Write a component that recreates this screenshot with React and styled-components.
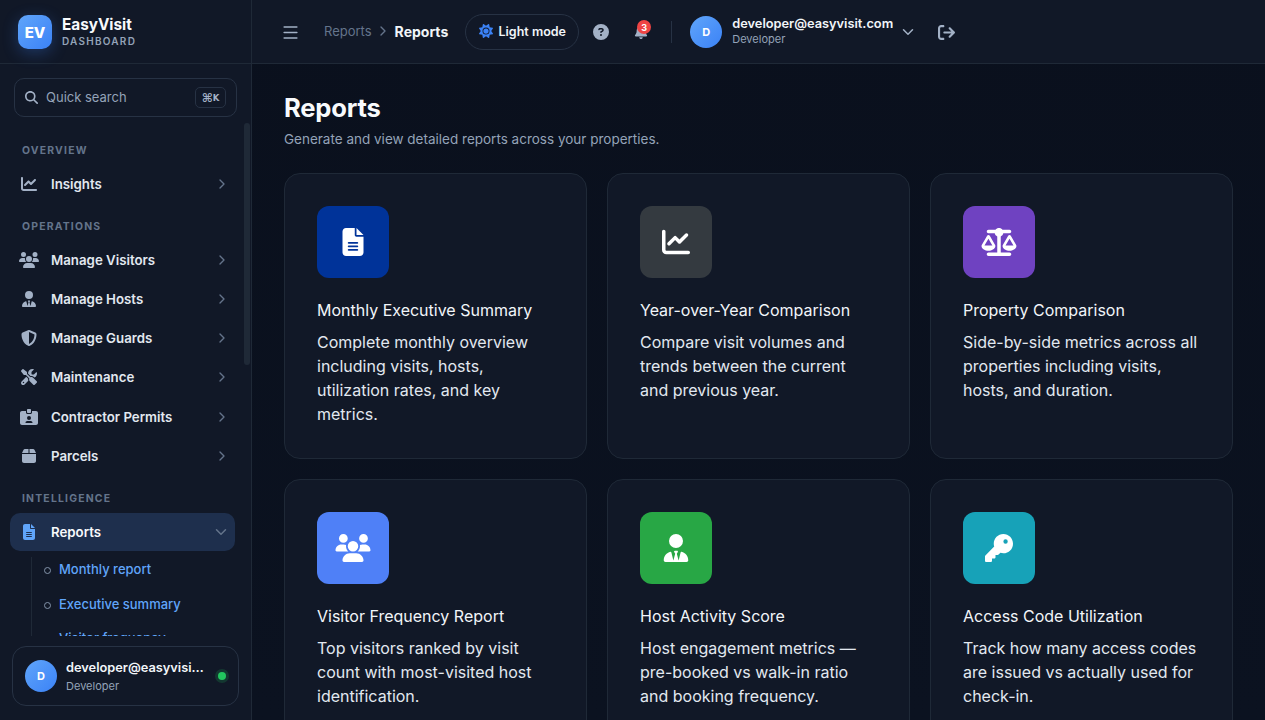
import React from "react";
import styled, { createGlobalStyle } from "styled-components";
import { ChevronRight, ChevronDown, Menu } from "lucide-react";
import {
  FaChartLine,
  FaUsers,
  FaUserTie,
  FaShieldHalved,
  FaScrewdriverWrench,
  FaIdCardClip,
  FaBox,
  FaFileLines,
  FaMagnifyingGlass,
  FaSun,
  FaCircleQuestion,
  FaBell,
  FaArrowRightFromBracket,
  FaScaleBalanced,
  FaKey,
} from "react-icons/fa6";

const GlobalStyle = createGlobalStyle`
  html, body, #root {
    margin: 0;
    height: 100%;
    overflow: hidden;
  }
  * {
    box-sizing: border-box;
  }
  body {
    background: #0b1120;
    font-family: Inter, "Liberation Sans", sans-serif;
    color: #f1f5f9;
  }
`;

const Shell = styled.div`
  display: flex;
  height: 720px;
`;

const Sidebar = styled.aside`
  position: relative;
  width: 252px;
  flex-shrink: 0;
  display: flex;
  flex-direction: column;
  background: #111827;
  border-right: 1px solid #1f2937;
`;

const Brand = styled.div`
  height: 64px;
  flex-shrink: 0;
  display: flex;
  align-items: center;
  gap: 10px;
  padding: 1px 18px 0;
  border-bottom: 1px solid #1f2937;
`;

const BrandMark = styled.div`
  width: 34px;
  height: 34px;
  border-radius: 10px;
  display: flex;
  align-items: center;
  justify-content: center;
  background: linear-gradient(135deg, #60a5fa, #3b82f6);
  box-shadow: 0 4px 16px rgba(59, 130, 246, 0.3);
  font-size: 15px;
  font-weight: 800;
  color: #fff;
`;

const BrandText = styled.div`
  display: flex;
  flex-direction: column;
`;

const BrandName = styled.span`
  font-size: 15.3px;
  line-height: 18px;
  font-weight: 700;
  color: #f8fafc;
`;

const BrandSub = styled.span`
  font-size: 10px;
  line-height: 14px;
  font-weight: 600;
  letter-spacing: 1.25px;
  color: #94a3b8;
`;

const Search = styled.div`
  flex-shrink: 0;
  height: 39px;
  margin: 14px 14px 0;
  padding: 0 10px;
  display: flex;
  align-items: center;
  gap: 8px;
  border: 1px solid #273244;
  border-radius: 10px;
  font-size: 13px;
  color: #94a3b8;

  svg {
    width: 13px;
    height: 13px;
    color: #a3b1c6;
  }
`;

const SearchLabel = styled.span`
  flex: 1;
  padding-bottom: 1px;
`;

const Kbd = styled.span`
  height: 21px;
  width: 31px;
  display: flex;
  align-items: center;
  justify-content: center;
  border: 1px solid #273244;
  border-radius: 5px;
  font-family: "DejaVu Sans", sans-serif;
  font-size: 12px;
  font-weight: 700;
  color: #a3b1c6;

  small {
    font-size: 8.5px;
    font-weight: 600;
  }
`;

const Nav = styled.nav`
  flex: 1;
  min-height: 0;
  overflow: hidden;
  padding: 0 16px 0 10px;
`;

const NavSection = styled.div`
  padding: ${(p) => (p.$first ? "27px" : "17px")} 12px 6px;
  font-size: 10.4px;
  line-height: 14px;
  font-weight: 700;
  letter-spacing: 1.2px;
  color: #64748b;
`;

const NavItem = styled.div`
  height: ${(p) => (p.$active ? "38px" : "39.2px")};
  margin-top: ${(p) => (p.$active ? "1px" : 0)};
  padding: 0 5px 0 9px;
  display: flex;
  align-items: center;
  gap: 12px;
  border-radius: 10px;
  background: ${(p) => (p.$active ? "#1e2f4d" : "transparent")};
  font-size: 13.28px;
  font-weight: 600;
  color: ${(p) => (p.$active ? "#f8fafc" : "#e2e8f0")};
`;

const NavIcon = styled.span`
  width: 20px;
  flex-shrink: 0;
  display: flex;
  justify-content: center;
  color: ${(p) => (p.$active ? "#60a5fa" : "#a3b1c6")};

  svg {
    width: 20px;
    height: 16px;
    flex-shrink: 0;
  }
`;

const NavLabel = styled.span`
  flex: 1;
`;

const Chevron = styled.span`
  display: flex;
  color: #64748b;
`;

const SubList = styled.div`
  margin: 6px 0 0 21px;
  display: flex;
  flex-direction: column;
  gap: 10.5px;
  border-left: 1px solid #1f2937;
`;

const SubItem = styled.div`
  position: relative;
  height: 24px;
  padding-left: 27px;
  display: flex;
  align-items: center;
  font-size: 13px;
  font-weight: 500;
  color: #60a5fa;

  &::before {
    content: "";
    position: absolute;
    left: 12px;
    top: 10px;
    width: 5px;
    height: 5px;
    border: 1px solid #8494aa;
    border-radius: 50%;
  }
`;

const ScrollThumb = styled.div`
  position: absolute;
  top: 123px;
  right: 1px;
  width: 6px;
  height: 242px;
  border-radius: 3px;
  background: #1f2937;
`;

const UserCard = styled.div`
  flex-shrink: 0;
  height: 60px;
  margin: 10px 12px 14px;
  padding: 0 12px;
  display: flex;
  align-items: center;
  gap: 9px;
  border: 1px solid #273244;
  border-radius: 14px;
`;

const Avatar = styled.div`
  width: 32px;
  height: 32px;
  flex-shrink: 0;
  border-radius: 50%;
  display: flex;
  align-items: center;
  justify-content: center;
  background: linear-gradient(135deg, #60a5fa, #3b82f6);
  font-size: 11px;
  font-weight: 700;
  color: #fff;
`;

const UserText = styled.div`
  min-width: 0;
  flex: 1;
  display: flex;
  flex-direction: column;
  gap: 3px;
`;

const HeaderUserText = styled(UserText)`
  flex: none;
  gap: 0;
  margin: 0 0 2px 10px;
`;

const UserEmail = styled.span`
  font-size: 12.8px;
  line-height: 16px;
  font-weight: 600;
  color: #f1f5f9;
  white-space: nowrap;
  overflow: hidden;
  text-overflow: ellipsis;
`;

const UserRole = styled.span`
  font-size: 11px;
  line-height: 14px;
  color: #94a3b8;
`;

const StatusDot = styled.span`
  width: 8px;
  height: 8px;
  flex-shrink: 0;
  margin: 0 0 0 5px;
  border-radius: 50%;
  background: #22c55e;
  box-shadow: 0 0 0 3px rgba(34, 197, 94, 0.18);
`;

const Content = styled.div`
  flex: 1;
  min-width: 0;
  display: flex;
  flex-direction: column;
  background: linear-gradient(180deg, #0a101d, #0b1220);
`;

const Header = styled.header`
  height: 64px;
  flex-shrink: 0;
  display: flex;
  align-items: center;
  padding: 1px 31px 0 29px;
  background: #111827;
  border-bottom: 1px solid #1f2937;
`;

const IconButton = styled.span`
  position: relative;
  display: flex;
  color: #a3b1c6;
  margin-left: ${(p) => p.$left || 0}px;
`;

const Crumbs = styled.div`
  margin: 0 0 2px 24px;
  display: flex;
  align-items: center;
  font-size: 13px;
  color: #64748b;
`;

const CrumbSep = styled.span`
  display: flex;
  margin: 0 4px 0 3px;
  color: #64748b;
`;

const CrumbCurrent = styled.span`
  font-size: 14px;
  font-weight: 700;
  color: #f1f5f9;
`;

const ThemePill = styled.div`
  height: 36px;
  width: 114px;
  margin-left: 17px;
  padding-bottom: 2px;
  display: flex;
  align-items: center;
  justify-content: center;
  gap: 6px;
  border: 1px solid #273244;
  border-radius: 18px;
  font-size: 12.5px;
  font-weight: 600;
  color: #f1f5f9;

  svg {
    width: 14px;
    height: 14px;
    color: #3b82f6;
  }
`;

const Badge = styled.span`
  position: absolute;
  top: -5px;
  right: -3px;
  width: 14px;
  height: 14px;
  border-radius: 50%;
  display: flex;
  align-items: center;
  justify-content: center;
  background: #ef4444;
  font-size: 9px;
  font-weight: 700;
  color: #fff;
`;

const Divider = styled.span`
  width: 1px;
  height: 22px;
  margin: 0 18px 0 23px;
  background: #273244;
`;

const Main = styled.main`
  flex: 1;
  min-height: 0;
  overflow: hidden;
  padding: 28px 32px 0;
`;

const PageTitle = styled.h1`
  margin: 0;
  font-size: 25.6px;
  line-height: 32px;
  font-weight: 700;
  letter-spacing: -0.2px;
  color: #f8fafc;
`;

const PageSub = styled.p`
  margin: 4px 0 0;
  font-size: 13.5px;
  line-height: 22px;
  color: #94a3b8;
`;

const CardGrid = styled.div`
  margin-top: 23px;
  display: grid;
  grid-template-columns: repeat(3, 303px);
  gap: 20px;
`;

const Card = styled.article`
  height: 286px;
  padding: 32px;
  background: #111827;
  border: 1px solid #1f2937;
  border-radius: 16px;
`;

const CardIcon = styled.div`
  width: 72px;
  height: 72px;
  border-radius: 12px;
  display: flex;
  align-items: center;
  justify-content: center;
  background: ${(p) => p.$bg};
  color: #fff;

  svg {
    width: 36px;
    height: 28px;
    flex-shrink: 0;
  }
`;

const CardTitle = styled.h3`
  margin: 20px 0 0;
  font-size: 16px;
  line-height: 24px;
  font-weight: 400;
  color: #f1f5f9;
`;

const CardText = styled.p`
  margin: 8px 0 0;
  font-size: 16px;
  line-height: 24px;
  color: #e2e8f0;
`;

const operations = [
  ["Manage Visitors", FaUsers],
  ["Manage Hosts", FaUserTie],
  ["Manage Guards", FaShieldHalved],
  ["Maintenance", FaScrewdriverWrench],
  ["Contractor Permits", FaIdCardClip],
  ["Parcels", FaBox],
];

const reports = [
  {
    title: "Monthly Executive Summary",
    text: "Complete monthly overview including visits, hosts, utilization rates, and key metrics.",
    bg: "#003399",
    Icon: FaFileLines,
  },
  {
    title: "Year-over-Year Comparison",
    text: "Compare visit volumes and trends between the current and previous year.",
    bg: "#343a40",
    Icon: FaChartLine,
  },
  {
    title: "Property Comparison",
    text: "Side-by-side metrics across all properties including visits, hosts, and duration.",
    bg: "#6f42c1",
    Icon: FaScaleBalanced,
  },
  {
    title: "Visitor Frequency Report",
    text: "Top visitors ranked by visit count with most-visited host identification.",
    bg: "#4f80f7",
    Icon: FaUsers,
  },
  {
    title: "Host Activity Score",
    text: "Host engagement metrics — pre-booked vs walk-in ratio and booking frequency.",
    bg: "#28a745",
    Icon: FaUserTie,
  },
  {
    title: "Access Code Utilization",
    text: "Track how many access codes are issued vs actually used for check-in.",
    bg: "#17a2b8",
    Icon: FaKey,
  },
];

function SideItem({ label, Icon }) {
  return (
    <NavItem>
      <NavIcon>
        <Icon />
      </NavIcon>
      <NavLabel>{label}</NavLabel>
      <Chevron>
        <ChevronRight size={16} />
      </Chevron>
    </NavItem>
  );
}

export default function App() {
  return (
    <Shell>
      <GlobalStyle />
      <Sidebar>
        <Brand>
          <BrandMark>EV</BrandMark>
          <BrandText>
            <BrandName>EasyVisit</BrandName>
            <BrandSub>DASHBOARD</BrandSub>
          </BrandText>
        </Brand>
        <Search>
          <FaMagnifyingGlass />
          <SearchLabel>Quick search</SearchLabel>
          <Kbd>
            ⌘<small>K</small>
          </Kbd>
        </Search>
        <Nav>
          <NavSection $first>OVERVIEW</NavSection>
          <SideItem label="Insights" Icon={FaChartLine} />
          <NavSection>OPERATIONS</NavSection>
          {operations.map(([label, Icon]) => (
            <SideItem key={label} label={label} Icon={Icon} />
          ))}
          <NavSection>INTELLIGENCE</NavSection>
          <NavItem $active>
            <NavIcon $active>
              <FaFileLines />
            </NavIcon>
            <NavLabel>Reports</NavLabel>
            <Chevron>
              <ChevronDown size={18} />
            </Chevron>
          </NavItem>
          <SubList>
            <SubItem>Monthly report</SubItem>
            <SubItem>Executive summary</SubItem>
            <SubItem>Visitor frequency</SubItem>
          </SubList>
        </Nav>
        <ScrollThumb />
        <UserCard>
          <Avatar>D</Avatar>
          <UserText>
            <UserEmail>developer@easyvisit.com</UserEmail>
            <UserRole>Developer</UserRole>
          </UserText>
          <StatusDot />
        </UserCard>
      </Sidebar>
      <Content>
        <Header>
          <IconButton>
            <Menu size={19} />
          </IconButton>
          <Crumbs>
            Reports
            <CrumbSep>
              <ChevronRight size={16} />
            </CrumbSep>
            <CrumbCurrent>Reports</CrumbCurrent>
          </Crumbs>
          <ThemePill>
            <FaSun />
            Light mode
          </ThemePill>
          <IconButton $left={14}>
            <FaCircleQuestion size={16} />
          </IconButton>
          <IconButton $left={25}>
            <FaBell size={14} />
            <Badge>3</Badge>
          </IconButton>
          <Divider />
          <Avatar>D</Avatar>
          <HeaderUserText>
            <UserEmail>developer@easyvisit.com</UserEmail>
            <UserRole>Developer</UserRole>
          </HeaderUserText>
          <IconButton $left={6}>
            <ChevronDown size={18} />
          </IconButton>
          <IconButton $left={21}>
            <FaArrowRightFromBracket size={17} />
          </IconButton>
        </Header>
        <Main>
          <PageTitle>Reports</PageTitle>
          <PageSub>Generate and view detailed reports across your properties.</PageSub>
          <CardGrid>
            {reports.map(({ title, text, bg, Icon }) => (
              <Card key={title}>
                <CardIcon $bg={bg}>
                  <Icon />
                </CardIcon>
                <CardTitle>{title}</CardTitle>
                <CardText>{text}</CardText>
              </Card>
            ))}
          </CardGrid>
        </Main>
      </Content>
    </Shell>
  );
}
